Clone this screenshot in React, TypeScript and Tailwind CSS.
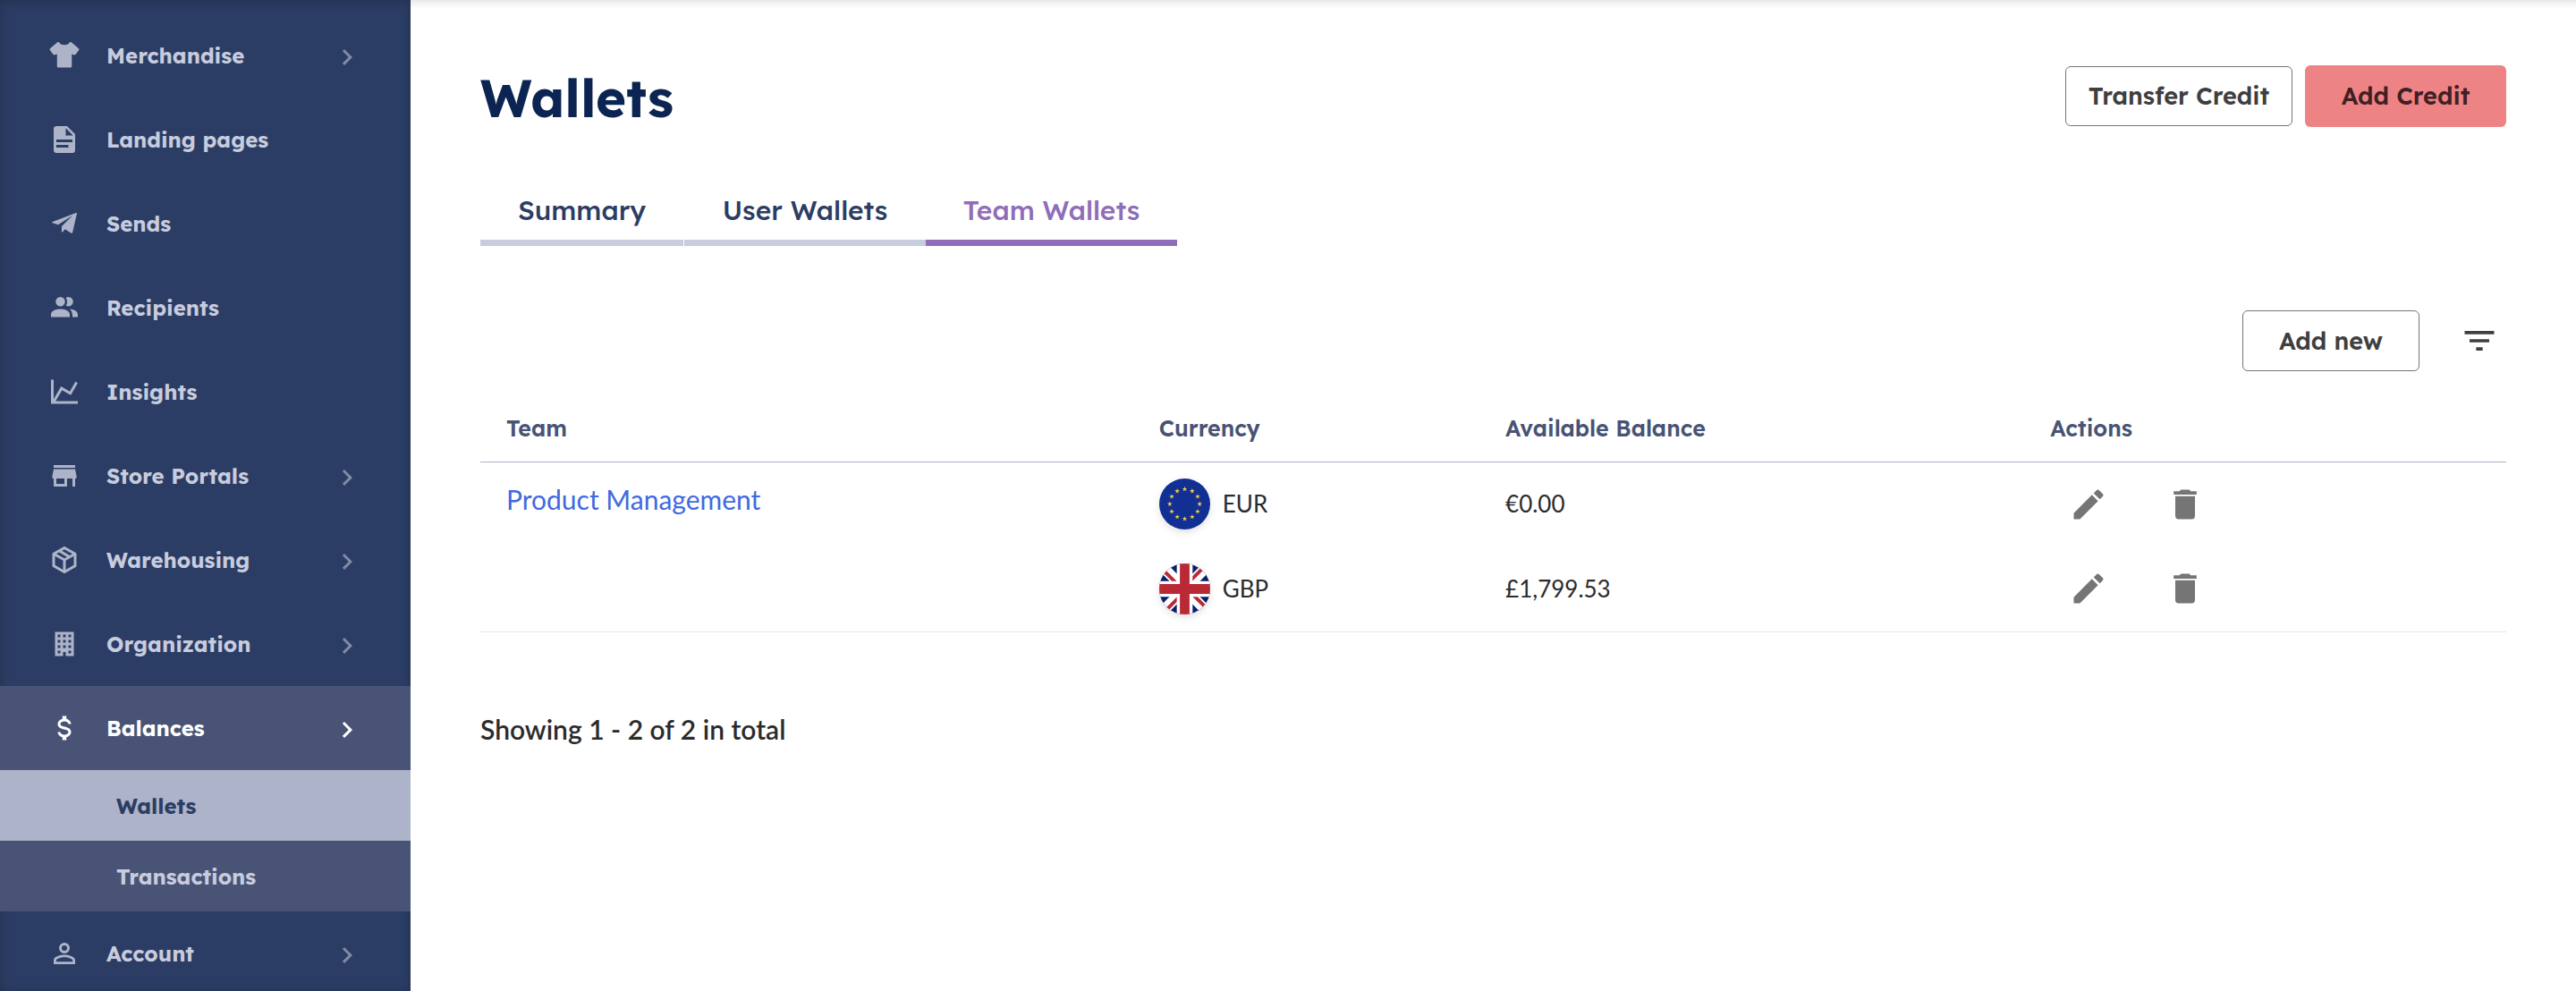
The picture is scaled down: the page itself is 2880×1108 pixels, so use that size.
import React from "react";

const heading = "font-['Lexend','Inter',sans-serif]";

const P = {
  shirt:
    "M22.5 6.6 17 2c-.3-.1-.6-.1-.9 0C15.600 3.300 13.900 4.200 12 4.200S8.400 3.300 7.900 2c-.3-.1-.6-.1-.9 0L1.500 6.600c-.5.4-.6 1-.2 1.500l2.300 3c.3.500 1 .600 1.500.400L6.500 11v9c0 .6.400 1 1 1h9c.6 0 1-.4 1-1v-9l1.400.500c.5.200 1.200.100 1.500-.4l2.300-3c.4-.5.300-1.100-.2-1.500Z",
  doc: "M13,9H18.5L13,3.5V9M6,2H14L20,8V20A2,2 0 0,1 18,22H6C4.89,22 4,21.1 4,20V4C4,2.89 4.89,2 6,2M15,18V16H6V18H15M18,14V12H6V14H18Z",
  plane:
    "M20.600 4 3.200 10.700c-.5.200-.5.600 0 .800L7.300 12.800 18 6 10 14V18c0 .4.300.5.600.300L12.500 16.200 16.900 19c.6.300 1.100.100 1.200-.5L21.300 4.500c.1-.5-.2-.7-.7-.5Z",
  people:
    "M16 17V19H2V17S2 13 9 13 16 17 16 17M12.5 7.5A3.5 3.5 0 1 0 9 11A3.5 3.5 0 0 0 12.5 7.5M15.94 13A5.32 5.32 0 0 1 18 17V19H22V17S22 13.37 15.94 13M15 4A3.39 3.39 0 0 0 13.07 4.59A5 5 0 0 1 13.07 10.41A3.39 3.39 0 0 0 15 11A3.5 3.5 0 0 0 15 4Z",
  chart:
    "M16,11.78L20.24,4.45L21.97,5.45L16.74,14.5L10.23,10.75L5.46,19H22V21H2V3H4V17.54L9.5,8L16,11.78Z",
  store: "M12,18H6V14H12M21,14V12L20,7H4L3,12V14H4V20H14V14H18V20H20V14M20,4H4V6H20V4Z",
  box: "M21,16.5C21,16.88 20.79,17.21 20.47,17.38L12.57,21.82C12.41,21.94 12.21,22 12,22C11.79,22 11.59,21.94 11.43,21.82L3.53,17.38C3.21,17.21 3,16.88 3,16.5V7.5C3,7.12 3.21,6.79 3.53,6.62L11.43,2.18C11.59,2.06 11.79,2 12,2C12.21,2 12.41,2.06 12.57,2.18L20.47,6.62C20.79,6.79 21,7.12 21,7.5V16.5M12,4.15L10.11,5.22L16,8.61L17.96,7.5L12,4.15M6.04,7.5L12,10.85L13.96,9.75L8.08,6.35L6.04,7.5M5,15.91L11,19.29V12.58L5,9.21V15.91M19,15.91V9.21L13,12.58V19.29L19,15.91Z",
  building:
    "M5 3V21H11V18H13V21H19V3H5M7 5H9V7H7V5M11 5H13V7H11V5M15 5H17V7H15V5M7 9H9V11H7V9M11 9H13V11H11V9M15 9H17V11H15V9M7 13H9V15H7V13M11 13H13V15H11V13M15 13H17V15H15V13M7 17H9V19H7V17M15 17H17V19H15V17Z",
  dollar:
    "M7,15H9C9,16.08 10.37,17 12,17C13.63,17 15,16.08 15,15C15,13.9 13.96,13.5 11.76,12.97C9.64,12.44 7,11.78 7,9C7,7.21 8.47,5.69 10.5,5.18V3H13.5V5.18C15.53,5.69 17,7.21 17,9H15C15,7.92 13.63,7 12,7C10.37,7 9,7.92 9,9C9,10.1 10.04,10.5 12.24,11.03C14.36,11.56 17,12.22 17,15C17,16.79 15.53,18.31 13.5,18.82V21H10.5V18.82C8.47,18.31 7,16.79 7,15Z",
  account:
    "M12,4A4,4 0 0,1 16,8A4,4 0 0,1 12,12A4,4 0 0,1 8,8A4,4 0 0,1 12,4M12,6A2,2 0 0,0 10,8A2,2 0 0,0 12,10A2,2 0 0,0 14,8A2,2 0 0,0 12,6M12,13C14.67,13 20,14.33 20,17V20H4V17C4,14.33 9.33,13 12,13M12,14.9C9.03,14.9 5.9,16.36 5.9,17V18.1H18.1V17C18.1,16.36 14.97,14.9 12,14.9Z",
  chevron: "M8.59,16.58L13.17,12L8.59,7.41L10,6L16,12L10,18L8.59,16.58Z",
  pencil:
    "M20.71,7.04C21.1,6.65 21.1,6 20.71,5.63L18.37,3.29C18,2.9 17.35,2.9 16.96,3.29L15.12,5.12L18.87,8.87M3,17.25V21H6.75L17.81,9.93L14.06,6.18L3,17.25Z",
  trash:
    "M19,4H15.5L14.5,3H9.5L8.5,4H5V6H19M6,19A2,2 0 0,0 8,21H16A2,2 0 0,0 18,19V7H6V19Z",
  filter: "M6,13H18V11H6M3,6V8H21V6M10,18H14V16H10V18Z",
};

function Icon({ d, className = "" }: { d: string; className?: string }) {
  return (
    <svg viewBox="0 0 24 24" fill="currentColor" aria-hidden="true" className={`shrink-0 ${className}`}>
      <path d={d} />
    </svg>
  );
}

type Item = { label: string; icon: string; more?: boolean };

const items: Item[] = [
  { label: "Merchandise", icon: P.shirt, more: true },
  { label: "Landing pages", icon: P.doc },
  { label: "Sends", icon: P.plane },
  { label: "Recipients", icon: P.people },
  { label: "Insights", icon: P.chart },
  { label: "Store Portals", icon: P.store, more: true },
  { label: "Warehousing", icon: P.box, more: true },
  { label: "Organization", icon: P.building, more: true },
];

function NavItem({ item, active = false }: { item: Item; active?: boolean }) {
  return (
    <a
      href="#"
      className={`flex h-[94px] items-center pr-[53px] pl-[54px] ${active ? "bg-[#485375] text-white" : "text-[#c7ccde]"}`}
    >
      <Icon d={item.icon} className={`size-9 ${active ? "" : "text-[#adb3c8]"}`} />
      <span className="ml-[29px] grow">{item.label}</span>
      {item.more && <Icon d={P.chevron} className={`mt-1 size-9 ${active ? "" : "text-[#8089a6]"}`} />}
    </a>
  );
}

function Sidebar() {
  return (
    <nav
      aria-label="Main"
      className={`${heading} h-screen w-[459px] shrink-0 overflow-hidden bg-[#2b3d64] pt-[15px] text-[24px] font-bold shadow-[inset_0_2px_12px_rgba(0,0,0,0.2)]`}
    >
      {items.map((i) => (
        <NavItem key={i.label} item={i} />
      ))}
      <NavItem active item={{ label: "Balances", icon: P.dollar, more: true }} />
      <a href="#" className="flex h-[79px] items-center bg-[#adb3c8] pl-[130px] text-[#2b3d64]">
        Wallets
      </a>
      <a href="#" className="flex h-[79px] items-center bg-[#485375] pl-[130px] text-[#c7ccde]">
        Transactions
      </a>
      <NavItem item={{ label: "Account", icon: P.account, more: true }} />
    </nav>
  );
}

const STAR = "0,-1 .225,-.309 .951,-.309 .363,.118 .588,.809 0,.382 -.588,.809 -.363,.118 -.951,-.309 -.225,-.309";

const flagClass = "size-[57px] rounded-full shadow-[0_3px_8px_rgba(0,0,0,0.12)]";

function EuFlag() {
  return (
    <svg viewBox="0 0 58 58" aria-hidden="true" className={flagClass}>
      <rect width="58" height="58" fill="#123093" />
      {Array.from({ length: 12 }, (_, i) => {
        const a = (i * Math.PI) / 6;
        return (
          <polygon
            key={i}
            points={STAR}
            fill="#f8d048"
            transform={`translate(${29 + 17 * Math.sin(a)} ${29 - 17 * Math.cos(a)}) scale(3)`}
          />
        );
      })}
    </svg>
  );
}

function UkFlag() {
  return (
    <svg viewBox="0 0 58 58" aria-hidden="true" className={flagClass}>
      <rect width="58" height="58" fill="#0a1f69" />
      <path d="M0 0 58 58M58 0 0 58" stroke="#fff" strokeWidth="12" />
      <path d="M0 3 29 32M29 26 58 55M58 -3 29 26M29 32 0 61" stroke="#ba2a36" strokeWidth="4" />
      <path d="M29 0V58M0 29H58" stroke="#fff" strokeWidth="18" />
      <path d="M29 0V58M0 29H58" stroke="#ba2a36" strokeWidth="11" />
    </svg>
  );
}

const tabs = [
  { label: "Summary", width: "w-[227px]" },
  { label: "User Wallets", width: "w-[270px]" },
  { label: "Team Wallets", width: "w-[281px]" },
];

const rows = [
  { code: "EUR", flag: <EuFlag />, balance: "€0.00" },
  { code: "GBP", flag: <UkFlag />, balance: "£1,799.53" },
];

const outline = "rounded-md border border-[#757575] bg-white text-[#3f3f3f]";

export default function App() {
  return (
    <div className="flex min-h-screen bg-white font-['Lato',sans-serif] text-[#2b2b2b]">
      <Sidebar />
      <main className="flex min-w-0 grow flex-col pr-[78px] pl-[78px] shadow-[inset_0_12px_10px_-10px_rgba(0,0,0,0.14)]">
        <header className={`${heading} mt-[73px] flex items-start justify-between`}>
          <h1 className="text-[58px] leading-[73px] font-bold text-[#0b2451]">Wallets</h1>
          <div className="flex items-center gap-[14px] text-[27px] font-semibold">
            <button type="button" className={`${outline} h-[67px] w-[254px]`}>
              Transfer Credit
            </button>
            <button type="button" className="h-[69px] w-[225px] rounded-md bg-[#ee8385] text-[#421f24]">
              Add Credit
            </button>
          </div>
        </header>

        <div role="tablist" className={`${heading} mt-[56px] flex text-[30px] font-medium`}>
          {tabs.map((t, i) => (
            <button
              key={t.label}
              type="button"
              role="tab"
              aria-selected={i === 2}
              className={`${t.width} h-[73px] border-b-[7px] ${i === 2 ? "border-[#8f6db8] text-[#8f6db8]" : "border-[#c7ccde] text-[#2b3d64]"} ${i === 0 ? "mr-px" : ""}`}
            >
              {t.label}
            </button>
          ))}
        </div>

        <div className="mt-[72px] flex items-center justify-end gap-[45px] pr-[8px]">
          <button type="button" className={`${outline} ${heading} h-[68px] w-[198px] text-[27px] font-semibold`}>
            Add new
          </button>
          <button type="button" aria-label="Filter" className="text-[#3f3f3f]">
            <Icon d={P.filter} className="size-11" />
          </button>
        </div>

        <table className="mt-[27px] w-full table-fixed border-collapse text-left">
          <colgroup>
            <col className="w-[33.5%]" />
            <col className="w-[17.1%]" />
            <col className="w-[26.9%]" />
            <col />
          </colgroup>
          <thead>
            <tr className={`${heading} h-[74px] border-b border-[#adb3c8] text-[25px] text-[#485375]`}>
              <th className="pl-[29px] font-semibold">Team</th>
              <th className="font-semibold">Currency</th>
              <th className="font-semibold">Available Balance</th>
              <th className="font-semibold">Actions</th>
            </tr>
          </thead>
          <tbody className="border-b border-[#e4e4f4] text-[26px]">
            {rows.map((r, i) => (
              <tr key={r.code} className="h-[95px]">
                {i === 0 && (
                  <td rowSpan={2} className="pt-[19px] pl-[29px] align-top text-[30px]">
                    <a href="#" className="text-[#4169e1]">
                      Product Management
                    </a>
                  </td>
                )}
                <td>
                  <div className="flex items-center gap-[14px]">
                    {r.flag}
                    {r.code}
                  </div>
                </td>
                <td>{r.balance}</td>
                <td>
                  <div className="flex gap-[64px] pl-[21px] text-[#757575]">
                    <button type="button" aria-label={`Edit ${r.code} wallet`}>
                      <Icon d={P.pencil} className="size-11" />
                    </button>
                    <button type="button" aria-label={`Delete ${r.code} wallet`}>
                      <Icon d={P.trash} className="size-11" />
                    </button>
                  </div>
                </td>
              </tr>
            ))}
          </tbody>
        </table>

        <p className="mt-[88px] text-[30px] leading-[40px] font-semibold">Showing 1 - 2 of 2 in total</p>
      </main>
    </div>
  );
}
